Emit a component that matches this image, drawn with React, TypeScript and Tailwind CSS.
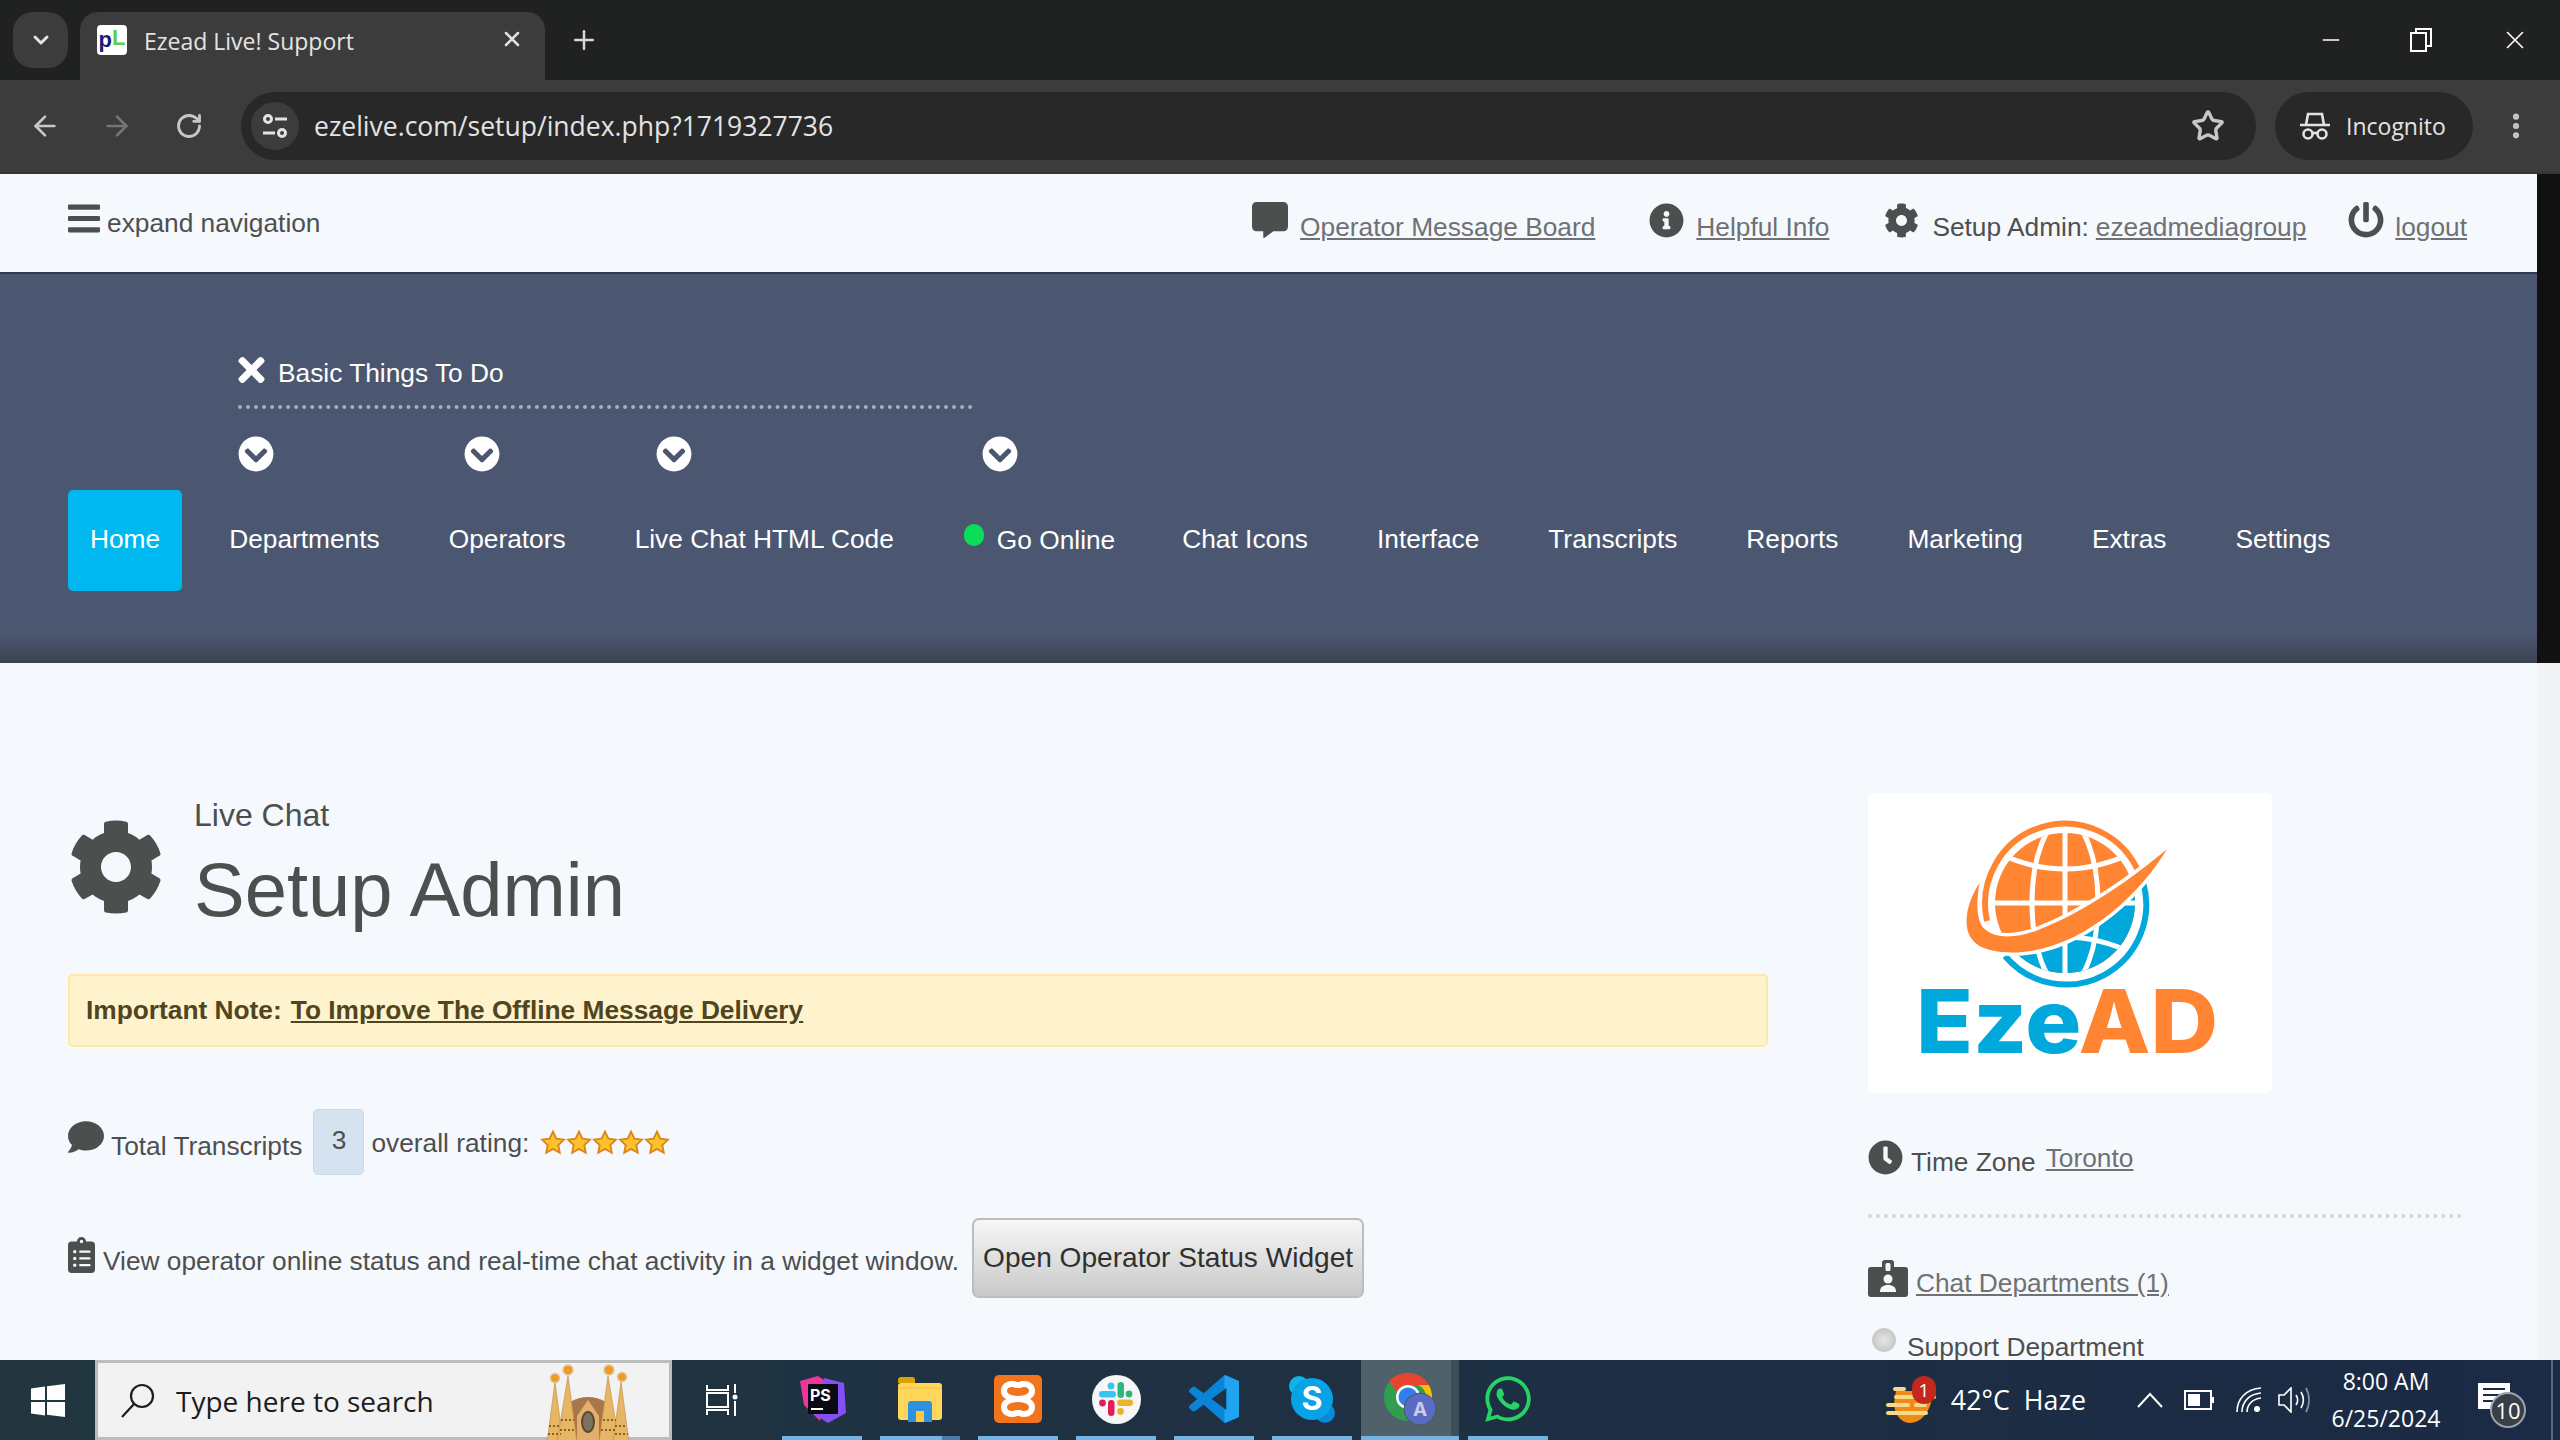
import { ArrowLeft, ArrowRight, ChevronDown, EllipsisVertical, Minus, Plus, RotateCw, Star, X } from 'lucide-react'
import {
  FaBars,
  FaChevronCircleDown,
  FaClipboardList,
  FaClock,
  FaCog,
  FaComment,
  FaCommentAlt,
  FaInfoCircle,
  FaPowerOff,
  FaTimes,
  FaWhatsapp,
} from 'react-icons/fa'

const navItems = ['Departments', 'Operators', 'Live Chat HTML Code', 'Go Online', 'Chat Icons', 'Interface', 'Transcripts', 'Reports', 'Marketing', 'Extras', 'Settings']

function ChromeBar() {
  return (
    <div className="font-['Open_Sans',sans-serif]">
      <div className="flex h-[80px] bg-[#202222] text-white">
        <div className="mt-[12px] ml-[13px] flex h-[56px] w-[55px] items-center justify-center rounded-[20px] bg-[#3c3c3c]">
          <ChevronDown size={24} strokeWidth={3} className="text-[#e3e3e3]" />
        </div>
        <div className="mt-[12px] ml-[12px] flex h-[68px] w-[465px] items-start rounded-t-[18px] bg-[#3c3c3c] pt-[13px] pl-[17px]">
          <div className="flex h-[30px] w-[30px] items-center justify-center rounded-[4px] bg-white font-['Liberation_Sans',sans-serif] text-[22px] leading-none font-bold">
            <span className="text-[#1d1a7a]">p</span>
            <span className="mb-[5px] text-[#5fd04a]">L</span>
          </div>
          <span className="mt-[2px] ml-[17px] text-[23px] leading-[28px] text-[#e3e3e3]">Ezead Live! Support</span>
          <X size={24} strokeWidth={2.5} className="mt-[2px] mr-[21px] ml-auto text-[#e3e3e3]" />
        </div>
        <Plus size={30} strokeWidth={2} className="mt-[25px] ml-[24px] text-[#d8d8d8]" />
        <div className="ml-auto flex items-start">
          <Minus size={26} strokeWidth={1.5} className="mt-[27px] mr-[66px]" />
          <svg width="22" height="24" viewBox="0 0 22 24" fill="none" stroke="white" strokeWidth="2" className="mt-[28px] mr-[68px]">
            <rect x="1" y="5" width="15" height="18" />
            <path d="M6 5V1h15v17h-5" />
          </svg>
          <X size={30} strokeWidth={1.3} className="mt-[25px] mr-[30px]" />
        </div>
      </div>
      <div className="flex h-[94px] items-center border-b-2 border-[#343434] bg-[#3c3c3c] text-[#c7c7c7]">
        <ArrowLeft size={32} strokeWidth={2} className="ml-[29px]" />
        <ArrowRight size={32} strokeWidth={2} className="ml-[40px] text-[#757575]" />
        <RotateCw size={28} strokeWidth={2.4} className="ml-[42px]" />
        <div className="ml-[38px] flex h-[68px] w-[2015px] items-center rounded-full bg-[#282828] pl-[10px]">
          <div className="flex h-[48px] w-[48px] items-center justify-center rounded-full bg-[#3c3c3c]">
            <svg width="28" height="26" viewBox="0 0 28 26" fill="none" stroke="#e3e3e3" strokeWidth="3">
              <circle cx="7" cy="6" r="3.5" />
              <path d="M14 6h12M2 20h12" />
              <circle cx="21" cy="20" r="3.5" />
            </svg>
          </div>
          <span className="ml-[15px] text-[26.5px] leading-none text-[#e3e3e3]">ezelive.com/setup/index.php?1719327736</span>
          <Star size={34} strokeWidth={2.4} className="mr-[31px] ml-auto" />
        </div>
        <div className="ml-[19px] flex h-[68px] w-[198px] items-center rounded-full bg-[#282828] pl-[24px] text-[#e3e3e3]">
          <svg width="32" height="28" viewBox="0 0 32 28" fill="none" stroke="currentColor" strokeWidth="2.6">
            <path d="M1 13h30M7 13l2-11h14l2 11" />
            <circle cx="9" cy="22" r="4.5" />
            <circle cx="23" cy="22" r="4.5" />
            <path d="M13.5 21h5" />
          </svg>
          <span className="ml-[15px] text-[23px] leading-none">Incognito</span>
        </div>
        <EllipsisVertical size={32} strokeWidth={2.6} className="ml-[27px]" />
      </div>
    </div>
  )
}

function TopNav() {
  return (
    <div className="flex h-[100px] items-center border-b-2 border-[#2f3a4d] bg-[#f5f9fd] pr-[70px] pl-[68px] text-[26.3px] leading-none text-[#4d4f4f]">
      <FaBars className="mb-[10px] h-[37px] w-[32px]" />
      <span className="ml-[7px]">expand navigation</span>
      <div className="ml-auto flex items-center">
        <FaCommentAlt className="mb-[6px] text-[36px]" />
        <a className="mt-[8px] ml-[12px] text-[#6f7173] underline">Operator Message Board</a>
        <FaInfoCircle className="mb-[6px] ml-[54px] text-[35px]" />
        <a className="mt-[8px] ml-[12px] text-[#6f7173] underline">Helpful Info</a>
        <FaCog className="mb-[6px] ml-[55px] text-[35px]" />
        <span className="mt-[8px] ml-[13px]">Setup Admin:</span>
        <a className="mt-[8px] ml-[7px] text-[#6f7173] underline">ezeadmediagroup</a>
        <FaPowerOff className="mb-[6px] ml-[42px] text-[36px]" />
        <a className="mt-[8px] ml-[11px] text-[#6f7173] underline">logout</a>
      </div>
    </div>
  )
}

function Hero() {
  return (
    <div className="flex h-[389px] flex-col bg-linear-to-b from-[#4b5770] from-[93%] to-[#39424f] pt-[85px] text-[26.3px] leading-none text-white">
      <div className="ml-[238px] w-[735px]">
        <div className="flex h-[28px] items-center">
          <FaTimes className="mb-[6px] h-[38px] w-[27px]" />
          <span className="ml-[13px]">Basic Things To Do</span>
        </div>
        <div className="mt-[18px] border-t-[4px] border-dotted border-[#a7aebb]" />
      </div>
      <div className="mt-[27px] ml-[238px] flex text-[36px]">
        <FaChevronCircleDown />
        <FaChevronCircleDown className="ml-[190px]" />
        <FaChevronCircleDown className="ml-[156px]" />
        <FaChevronCircleDown className="ml-[290px]" />
      </div>
      <div className="mt-[18px] ml-[68px] flex h-[101px] gap-[25px]">
        <a className="flex items-center rounded-[5px] bg-[#00b8f0] px-[22px] pb-[2px]">Home</a>
        {navItems.map((item) =>
          item === 'Go Online' ? (
            <a key={item} className="flex items-center pr-[20px] pb-[1px] pl-[23px]">
              <span className="mr-[13px] mb-[11px] h-[22px] w-[20px] rounded-full bg-[#0ade58]" />
              {item}
            </a>
          ) : (
            <a key={item} className="flex items-center px-[22px] pb-[2px]">
              {item}
            </a>
          ),
        )}
      </div>
    </div>
  )
}

function EzeLogo() {
  return (
    <svg viewBox="0 0 404 300" className="h-[300px] w-[404px]">
      <defs>
        <clipPath id="globe">
          <circle cx="197" cy="110" r="70" />
        </clipPath>
      </defs>
      <g clipPath="url(#globe)">
        <rect x="100" y="20" width="200" height="180" fill="#ff8533" />
        <path d="M118 150 C 190 165, 260 110, 299 56 L300 220 L100 220 Z" fill="#00a8dc" />
        <g fill="none" stroke="white" strokeWidth="5">
          <path d="M197 30v160M110 110h180" />
          <ellipse cx="197" cy="110" rx="33" ry="84" />
          <path d="M130 60 Q197 92 264 60M130 160 Q197 128 264 160" />
        </g>
      </g>
      <path d="M119 128 A80 80 0 0 1 271 80" fill="none" stroke="#ff8533" strokeWidth="6" />
      <path d="M275 89 A80 80 0 0 1 137 163" fill="none" stroke="#00a8dc" strokeWidth="6" />
      <path
        d="M299 56 C 270 105, 205 165, 134 159 C 108 157, 96 145, 99 122 C 100 112, 105 100, 111.5 90 C 108 110, 108 130, 118 137 C 128 146, 150 145, 170 137 C 215 120, 265 85, 299 56 Z"
        fill="#ff8533"
        stroke="white"
        strokeWidth="7"
        paintOrder="stroke"
      />
      <text x="48" y="260" textLength="302" lengthAdjust="spacingAndGlyphs" fontFamily="Inter, sans-serif" fontWeight="800" fontSize="88">
        <tspan fill="#00a8dc">Eze</tspan>
        <tspan fill="#ff8533">AD</tspan>
      </text>
    </svg>
  )
}

function Stars() {
  return (
    <div className="ml-[11px] flex">
      {[0, 1, 2, 3, 4].map((i) => (
        <svg key={i} width="26" height="25" viewBox="0 0 24 24">
          <path d="M12 1.5l3.2 6.9 7.3.9-5.4 5.1 1.4 7.4L12 18.1l-6.5 3.7 1.4-7.4L1.5 9.3l7.3-.9z" fill="#fcc22e" stroke="#d9861c" strokeWidth="1.8" />
        </svg>
      ))}
    </div>
  )
}

function MainContent() {
  return (
    <div className="flex min-h-0 flex-1 gap-[100px] overflow-hidden bg-[#f5f9fd] pt-[130px] pl-[68px] text-[26.3px] leading-none text-[#4d4f4f]">
      <div className="w-[1700px] shrink-0">
        <div className="flex h-[181px]">
          <FaCog className="mt-[26px] text-[96px]" />
          <div className="ml-[30px]">
            <div className="mt-[5px] text-[32px] leading-[34px]">Live Chat</div>
            <div className="mt-[15px] text-[76px] leading-[86px]">Setup Admin</div>
          </div>
        </div>
        <div className="flex h-[73px] items-center rounded-[5px] border-2 border-[#ffe8a1] bg-[#fff3cd] pl-[16px] font-bold text-[#4f4520]">
          <span>Important Note:</span>
          <a className="ml-[9px] underline">To Improve The Offline Message Delivery</a>
        </div>
        <div className="mt-[62px] flex h-[66px] items-center">
          <FaComment className="mb-[10px] text-[36px]" />
          <span className="mt-[9px] ml-[7px]">Total Transcripts</span>
          <span className="mr-[7px] ml-[11px] flex h-[66px] w-[51px] items-center justify-center rounded-[5px] border border-[#c9d9e8] bg-[#d5e2ef] pb-[4px]">3</span>
          <span className="mt-[2px]">overall rating:</span>
          <Stars />
        </div>
        <div className="mt-[43px] flex h-[80px] items-center">
          <FaClipboardList className="mb-[6px] h-[36px] w-[27px]" />
          <span className="mt-[6px] ml-[8px]">View operator online status and real-time chat activity in a widget window.</span>
          <button className="ml-[13px] h-[80px] w-[392px] rounded-[7px] border-2 border-[#bdbdbf] bg-linear-to-b from-[#f7f7f7] to-[#c9c9c9] text-[28.1px] text-[#303030]">
            Open Operator Status Widget
          </button>
        </div>
      </div>
      <div className="w-[594px] shrink-0">
        <div className="h-[300px] w-[404px] rounded-[5px] bg-white">
          <EzeLogo />
        </div>
        <div className="mt-[47px] flex h-[35px] items-center">
          <FaClock className="text-[35px]" />
          <span className="mt-[9px] ml-[8px]">Time Zone</span>
          <a className="mt-[1px] ml-[10px] text-[#6f7173] underline">Toronto</a>
        </div>
        <div className="mt-[39px] border-t-[4px] border-dotted border-[#d3d6d9]" />
        <div className="mt-[42px] flex h-[37px] items-center">
          <svg width="40" height="37" viewBox="0 0 40 37" fill="#4d4f4f">
            <path d="M3 7h11V3a3 3 0 0 1 3-3h6a3 3 0 0 1 3 3v4h11a3 3 0 0 1 3 3v24a3 3 0 0 1-3 3H3a3 3 0 0 1-3-3V10a3 3 0 0 1 3-3z" />
            <rect x="17.5" y="3" width="5" height="8" rx="1.5" fill="#f5f9fd" />
            <circle cx="20" cy="19" r="4.5" fill="#f5f9fd" />
            <path d="M12 32c0-5 3-7 8-7s8 2 8 7z" fill="#f5f9fd" />
          </svg>
          <a className="mt-[9px] ml-[8px] text-[#6f7173] underline">Chat Departments (1)</a>
        </div>
        <div className="mt-[31px] flex h-[28px]">
          <span className="ml-[4px] h-[24px] w-[24px] rounded-full border border-[#c4c4c4] bg-radial from-[#e6e6e6] to-[#bdbdbd]" />
          <span className="mt-[6px] ml-[11px]">Support Department</span>
        </div>
      </div>
    </div>
  )
}

function TaskSlot({ children, active, stacked }: { children: React.ReactNode; active?: boolean; stacked?: boolean }) {
  return (
    <div className="relative flex h-full w-[98px] items-center justify-center">
      {active && <div className="absolute top-0 right-[8px] bottom-0 left-0 bg-[#4f626c]" />}
      {active && <div className="absolute top-0 right-0 bottom-0 w-[8px] bg-[#3f4d5a]" />}
      <div className="relative mb-[2px] flex items-center justify-center">{children}</div>
      <div className={active ? 'absolute right-0 bottom-0 left-0 h-[4px] bg-[#72b4e4]' : 'absolute right-[9px] bottom-0 left-[9px] h-[4px] bg-[#72b4e4]'} />
      {stacked && <div className="absolute right-[9px] bottom-0 h-[4px] w-[18px] bg-[#4a7da5]" />}
    </div>
  )
}

function Cathedral() {
  return (
    <svg width="90" height="78" viewBox="0 0 90 78">
      <path d="M27 38 Q45 28 63 38 L66 78 H24 Z" fill="#a8764a" />
      <path d="M45 36 L56 52 V78 H34 V52 Z" fill="#e2b06c" />
      <ellipse cx="45" cy="58" rx="6" ry="10" fill="#7b7260" stroke="#5e4630" strokeWidth="2" />
      <g fill="#e7b664" stroke="#c08a3c" strokeWidth="0.6">
        <path d="M12 18 L4 78 H20 Z" />
        <path d="M25 12 L14 78 H34 Z" />
        <path d="M65 12 L56 78 H76 Z" />
        <path d="M78 18 L70 78 H86 Z" />
      </g>
      <g fill="none" stroke="#8a5f2c" strokeWidth="2" strokeDasharray="2 2">
        <path d="M6 62h12M18 56h13M60 56h13M72 62h12M5 70h13M17 66h15M58 66h15M72 70h13" />
      </g>
      <g fill="#ef9b1f" stroke="#d9c8a8" strokeWidth="1.5">
        <circle cx="12" cy="14" r="4.5" />
        <circle cx="25" cy="6" r="5" />
        <circle cx="66" cy="6" r="5" />
        <circle cx="79" cy="13" r="4.5" />
      </g>
    </svg>
  )
}

function Taskbar() {
  return (
    <div className="flex h-[80px] shrink-0 bg-linear-to-r from-[#22363f] to-[#1b2a45] font-['Open_Sans',sans-serif] text-white">
      <div className="flex w-[95px] items-center justify-center">
        <svg width="34" height="33" viewBox="0 0 34 33" fill="white">
          <path d="M0 4.5l14-2V16H0zM16 2.2L34 0v16H16zM0 18h14v13.5l-14-2zM16 18h18v15l-18-2.3z" />
        </svg>
      </div>
      <div className="flex w-[577px] border-[3px] border-[#bcbcbc] bg-[#f2f2f2] pl-[22px] text-[#1c1c1c]">
        <svg width="36" height="36" viewBox="0 0 36 36" fill="none" stroke="#1c1c1c" strokeWidth="2.2" className="mt-[20px]">
          <circle cx="22" cy="13" r="11" />
          <path d="M14 21L2 34" />
        </svg>
        <span className="mt-[24px] ml-[20px] text-[28px] leading-none">Type here to search</span>
        <div className="mt-[1px] mr-[36px] ml-auto">
          <Cathedral />
        </div>
      </div>
      <div className="flex w-[101px] items-center justify-center">
        <svg width="34" height="32" viewBox="0 0 34 32" fill="none" stroke="white" strokeWidth="2">
          <path d="M1 1v5h21V1M1 31v-5h21v5" />
          <rect x="1" y="9" width="21" height="14" />
          <path d="M29 0v9M29 17v15" />
          <circle cx="29" cy="13" r="2.5" fill="white" stroke="none" />
        </svg>
      </div>
      <TaskSlot>
        <svg width="48" height="48" viewBox="0 0 48 48">
          <path d="M2 6L20 1 30 8 22 46 6 30z" fill="#f0359b" />
          <path d="M26 3L46 8 48 38 30 48 14 38z" fill="#8450f5" />
          <rect x="10" y="9" width="30" height="30" fill="#0a0a12" />
          <text x="12" y="26" fill="white" fontSize="16" fontWeight="700" fontFamily="Inter, sans-serif">PS</text>
          <rect x="13" y="33" width="12" height="2" fill="white" />
        </svg>
      </TaskSlot>
      <TaskSlot stacked>
        <svg width="44" height="46" viewBox="0 0 44 46">
          <path d="M0 4a3 3 0 0 1 3-3h11a3 3 0 0 1 3 3v3H0z" fill="#d9a400" />
          <rect y="7" width="44" height="37" rx="3" fill="#ffd65c" />
          <path d="M0 12h44" stroke="#f2bd3a" strokeWidth="1" />
          <path d="M10 46V28a3 3 0 0 1 3-3h18a3 3 0 0 1 3 3v18h-8V35h-8v11z" fill="#2f8fe0" />
          <rect x="18" y="35" width="8" height="11" fill="#ffc83d" />
        </svg>
      </TaskSlot>
      <TaskSlot>
        <svg width="48" height="48" viewBox="0 0 48 48">
          <rect width="48" height="48" rx="5" fill="#f2741d" />
          <path
            d="M24 24C16 24 10 21 10 16 10 11 14 9 18 9 21 9 24 10 24 13M24 24C32 24 38 21 38 16 38 11 34 9 30 9 27 9 24 10 24 13M24 24C16 24 10 27 10 32 10 37 14 39 18 39 21 39 24 38 24 35M24 24C32 24 38 27 38 32 38 37 34 39 30 39 27 39 24 38 24 35"
            fill="none"
            stroke="white"
            strokeWidth="6"
          />
        </svg>
      </TaskSlot>
      <TaskSlot>
        <svg width="49" height="49" viewBox="0 0 49 49">
          <circle cx="24.5" cy="24.5" r="24.5" fill="#f6f6f6" />
          <rect x="7" y="16" width="17" height="6.5" rx="3.25" fill="#36c5f0" />
          <circle cx="19" cy="11" r="3.4" fill="#36c5f0" />
          <rect x="25.5" y="7" width="6.5" height="16" rx="3.25" fill="#2eb67d" />
          <circle cx="37" cy="19" r="3.4" fill="#2eb67d" />
          <rect x="16" y="25" width="6.5" height="16" rx="3.25" fill="#e01e5a" />
          <circle cx="10.5" cy="28" r="3.4" fill="#e01e5a" />
          <rect x="25" y="24.5" width="16" height="6.5" rx="3.25" fill="#ecb22e" />
          <circle cx="28.5" cy="36.5" r="3.4" fill="#ecb22e" />
        </svg>
      </TaskSlot>
      <TaskSlot>
        <svg width="50" height="48" viewBox="0 0 24 24" preserveAspectRatio="none">
          <path
            d="M23.15 2.587L18.21.21a1.494 1.494 0 0 0-1.705.29l-9.46 8.63-4.12-3.128a.999.999 0 0 0-1.276.057L.327 7.261A1 1 0 0 0 .326 8.74L3.899 12 .326 15.26a1 1 0 0 0 .001 1.479L1.65 17.94a.999.999 0 0 0 1.276.057l4.12-3.128 9.46 8.63a1.492 1.492 0 0 0 1.704.29l4.942-2.377A1.5 1.5 0 0 0 24 20.06V3.939a1.5 1.5 0 0 0-.85-1.352zm-5.146 14.861L10.826 12l7.178-5.448v10.896z"
            fill="#0a84d6"
          />
          <path d="M17 0.1L24 3V21L17 24V17.5L18 17.4V6.5L17 6.6Z" fill="#20a3f0" />
        </svg>
      </TaskSlot>
      <TaskSlot>
        <svg width="46" height="48" viewBox="0 0 46 48">
          <circle cx="10" cy="11" r="10" fill="#10b4e8" />
          <circle cx="36" cy="38" r="10" fill="#0a87d6" />
          <circle cx="23" cy="24" r="21" fill="#06a3e6" />
          <text x="23" y="35" textAnchor="middle" fill="white" fontSize="32" fontWeight="700" fontFamily="Inter, sans-serif">S</text>
        </svg>
      </TaskSlot>
      <TaskSlot active>
        <svg width="54" height="52" viewBox="0 0 54 52" className="ml-[2px]">
          <circle cx="24" cy="24" r="24" fill="#2f9e4f" />
          <path d="M24 0a24 24 0 0 1 20.8 12H24a12 12 0 0 0-11 7L5 8.5A24 24 0 0 1 24 0z" fill="#e8432e" />
          <path d="M44.8 12A24 24 0 0 1 36 44.8L24 36a12 12 0 0 0 10-24z" fill="#fbbc04" />
          <circle cx="24" cy="24" r="12" fill="white" />
          <circle cx="24" cy="24" r="9.5" fill="#2f7fec" />
          <circle cx="36" cy="36" r="16" fill="#5a6bc4" stroke="#49575f" strokeWidth="1" />
          <text x="36" y="43" textAnchor="middle" fill="#c8cdea" fontSize="19" fontWeight="700" fontFamily="Inter, sans-serif">A</text>
        </svg>
      </TaskSlot>
      <TaskSlot>
        <FaWhatsapp className="text-[52px] text-[#25d366]" />
      </TaskSlot>
      <div className="ml-auto flex items-center">
        <div className="relative h-[46px] w-[50px]">
          <svg width="50" height="46" viewBox="0 0 50 46">
            <path d="M10 14h36c1 18-10 32-22 32C14 46 8 36 8 26z" fill="#f08a16" />
            <g stroke="#f6d98a" strokeWidth="4" strokeLinecap="round">
              <path d="M9 12h9M10 20h38M2 28h20M30 28h9M2 36h38" />
            </g>
          </svg>
          <span className="absolute -top-[1px] right-0 flex h-[28px] w-[24px] items-center justify-center rounded-full bg-[#c4281c] text-[19px] leading-none">1</span>
        </div>
        <span className="ml-[15px] text-[26.8px] leading-none">42°C&nbsp; Haze</span>
        <svg width="26" height="16" viewBox="0 0 26 16" fill="none" stroke="white" strokeWidth="2" className="ml-[51px]">
          <path d="M1 15L13 2l12 13" />
        </svg>
        <svg width="30" height="20" viewBox="0 0 30 20" className="ml-[21px]">
          <rect x="1" y="1" width="26" height="18" fill="none" stroke="white" strokeWidth="2" />
          <rect x="4" y="4" width="12" height="12" fill="white" />
          <rect x="27" y="7" width="3" height="6" fill="white" />
        </svg>
        <svg width="26" height="26" viewBox="0 0 26 26" fill="none" stroke="white" strokeWidth="1.6" className="ml-[22px]">
          <path d="M1 25C1 12 10 2 25 1M6 25C6 15 13 7 25 6M11 25c0-7 5-13 14-14" />
          <circle cx="21" cy="22" r="3" fill="white" stroke="none" />
        </svg>
        <svg width="32" height="26" viewBox="0 0 32 26" fill="none" stroke="white" strokeWidth="1.6" className="ml-[16px]">
          <path d="M1 8h5l7-7v24l-7-7H1z" />
          <path d="M18 8c2 3 2 7 0 10M23 5c3 5 3 11 0 16" />
          <path d="M28 1c4 7 4 17 0 24" stroke="#8a95a5" />
        </svg>
        <div className="ml-[14px] flex w-[124px] flex-col items-center gap-[14px] text-[23px] leading-none">
          <span>8:00 AM</span>
          <span>6/25/2024</span>
        </div>
        <div className="relative mb-[8px] ml-[30px] h-[26px] w-[50px]">
          <svg width="32" height="26" viewBox="0 0 32 26">
            <rect width="32" height="26" fill="white" />
            <path d="M5 6h22M5 12h22M5 18h14" stroke="#1b2a45" strokeWidth="2" />
          </svg>
          <span className="absolute top-[9px] left-[12px] flex h-[36px] w-[36px] items-center justify-center rounded-full border-2 border-[#9ba3ad] bg-[#3a3f47] text-[22px] leading-none">10</span>
        </div>
        <div className="ml-[23px] h-full w-[2px] bg-[#5b6878]" />
        <div className="w-[7px]" />
      </div>
    </div>
  )
}

export default function App() {
  return (
    <div className="flex h-[1440px] w-[2560px] flex-col overflow-hidden font-['Liberation_Sans',sans-serif]">
      <ChromeBar />
      <div className="flex min-h-0 flex-1">
        <div className="flex min-w-0 flex-1 flex-col">
          <TopNav />
          <Hero />
          <MainContent />
        </div>
        <div className="flex w-[23px] flex-col">
          <div className="h-[489px] bg-[#111111]" />
          <div className="flex-1 bg-[#f1f3f4]" />
        </div>
      </div>
      <Taskbar />
    </div>
  )
}
